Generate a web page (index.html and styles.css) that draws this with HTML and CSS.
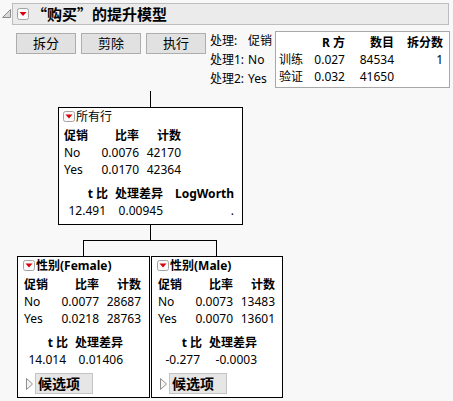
FILE: index.html
```html
<!DOCTYPE html>
<html lang="zh-CN">
<head>
<meta charset="utf-8">
<title>“购买”的提升模型</title>
<link rel="stylesheet" href="styles.css">
</head>
<body>
<div class="page">
  <div class="outline-head">
    <svg class="disc-open" width="9" height="9" viewBox="0 0 9 9"><polygon points="0.5,8.5 8.5,8.5 8.5,0.5" fill="#d9d9d9" stroke="#8c8c8c" stroke-width="1"/></svg>
    <div class="head-bar">
      <span class="menu-btn"><svg width="12" height="12" viewBox="0 0 12 12"><rect x="0.5" y="0.5" width="11" height="11" rx="2" fill="#fafafa" stroke="#a3a3a3"/><polygon points="2.5,4 9.5,4 6,8" fill="#d8000c"/></svg></span>
      <span class="head-title">“购买”的提升模型</span>
    </div>
  </div>

  <div class="controls">
    <div class="btns">
      <button class="btn">拆分</button>
      <button class="btn">剪除</button>
      <button class="btn">执行</button>
    </div>
    <div class="info">
      <span>处理:</span><span>促销</span>
      <span>处理1:</span><span>No</span>
      <span>处理2:</span><span>Yes</span>
    </div>
    <div class="summary">
      <span></span><span class="b r">R 方</span><span class="b r">数目</span><span class="b r">拆分数</span>
      <span>训练</span><span class="r">0.027</span><span class="r">84534</span><span class="r">1</span>
      <span>验证</span><span class="r">0.032</span><span class="r">41650</span><span></span>
    </div>
  </div>

  <div class="tree">
    <div class="vline"></div>
    <div class="node node-root">
      <div class="node-title">
        <span class="menu-btn small"><svg width="12" height="11" viewBox="0 0 12 11"><rect x="0.5" y="0.5" width="11" height="10" rx="2" fill="#fafafa" stroke="#a3a3a3"/><polygon points="2.5,3.5 9.5,3.5 6,7.5" fill="#d8000c"/></svg></span>
        <span class="title-text">所有行</span>
      </div>
      <div class="grid1">
        <span class="b">促销</span><span class="b r">比率</span><span class="b r">计数</span>
        <span>No</span><span class="r">0.0076</span><span class="r">42170</span>
        <span>Yes</span><span class="r">0.0170</span><span class="r">42364</span>
      </div>
      <div class="grid2 grid2-root">
        <span class="b r">t 比</span><span class="b r">处理差异</span><span class="b r">LogWorth</span>
        <span class="r v">12.491</span><span class="r">0.00945</span><span class="r">.</span>
      </div>
    </div>
    <div class="vline2"></div>
    <div class="connector"></div>
    <div class="children">
      <div class="node node-child node-left">
        <div class="node-title">
          <span class="menu-btn small"><svg width="12" height="11" viewBox="0 0 12 11"><rect x="0.5" y="0.5" width="11" height="10" rx="2" fill="#fafafa" stroke="#a3a3a3"/><polygon points="2.5,3.5 9.5,3.5 6,7.5" fill="#d8000c"/></svg></span>
          <span class="title-text b">性别(Female)</span>
        </div>
        <div class="grid1">
          <span class="b">促销</span><span class="b r">比率</span><span class="b r">计数</span>
          <span>No</span><span class="r">0.0077</span><span class="r">28687</span>
          <span>Yes</span><span class="r">0.0218</span><span class="r">28763</span>
        </div>
        <div class="grid2">
          <span class="b r">t 比</span><span class="b r">处理差异</span>
          <span class="r v">14.014</span><span class="r">0.01406</span>
        </div>
        <div class="cand">
          <svg class="disc-closed" width="7" height="12" viewBox="0 0 7 12"><polygon points="0.5,0.5 6.5,6 0.5,11.5" fill="#f4f4f4" stroke="#8c8c8c"/></svg>
          <span class="cand-btn">候选项</span>
        </div>
      </div>
      <div class="node node-child node-right">
        <div class="node-title">
          <span class="menu-btn small"><svg width="12" height="11" viewBox="0 0 12 11"><rect x="0.5" y="0.5" width="11" height="10" rx="2" fill="#fafafa" stroke="#a3a3a3"/><polygon points="2.5,3.5 9.5,3.5 6,7.5" fill="#d8000c"/></svg></span>
          <span class="title-text b">性别(Male)</span>
        </div>
        <div class="grid1">
          <span class="b">促销</span><span class="b r">比率</span><span class="b r">计数</span>
          <span>No</span><span class="r">0.0073</span><span class="r">13483</span>
          <span>Yes</span><span class="r">0.0070</span><span class="r">13601</span>
        </div>
        <div class="grid2">
          <span class="b r">t 比</span><span class="b r">处理差异</span>
          <span class="r v">-0.277</span><span class="r">-0.0003</span>
        </div>
        <div class="cand">
          <svg class="disc-closed" width="7" height="12" viewBox="0 0 7 12"><polygon points="0.5,0.5 6.5,6 0.5,11.5" fill="#f4f4f4" stroke="#8c8c8c"/></svg>
          <span class="cand-btn">候选项</span>
        </div>
      </div>
    </div>
  </div>
</div>
</body>
</html>
```

FILE: styles.css
```css
* { box-sizing: border-box; }

html, body {
  margin: 0;
  padding: 0;
  background: #f8f8f8;
}

body {
  font-family: "Noto Sans", "Noto Sans CJK SC", sans-serif;
  font-size: 12px;
  color: #000;
}

.page {
  width: 453px;
  height: 401px;
  padding-top: 3px;
  overflow: hidden;
}

.b { font-weight: bold; }
.r { text-align: right; }

/* header */
.outline-head {
  display: flex;
  align-items: flex-start;
}

.disc-open {
  display: block;
  margin-left: 2px;
  margin-top: 6px;
  flex: none;
}

.head-bar {
  flex: 1;
  margin-left: 1px;
  margin-right: 4px;
  height: 22px;
  border: 1px solid #bdbdbd;
  background: #ebebeb;
  display: flex;
  align-items: center;
  padding-left: 4px;
}

.menu-btn {
  display: flex;
  flex: none;
}

.menu-btn svg { display: block; }

.head-title {
  margin-left: 3px;
  font-family: "Noto Sans CJK SC", "Noto Sans", sans-serif;
  font-size: 15px;
  font-weight: bold;
  line-height: 20px;
}

/* controls */
.controls {
  display: flex;
  align-items: flex-start;
  margin-top: 6px;
  margin-left: 16px;
}

.btns {
  display: flex;
  gap: 5px;
  margin-top: 2px;
}

.btn {
  width: 60px;
  height: 21px;
  padding: 0;
  border: 1px solid #adadad;
  background: #e1e1e1;
  font-family: "Noto Sans", "Noto Sans CJK SC", sans-serif;
  font-size: 13px;
  line-height: 19px;
  color: #000;
}

.info {
  width: 62px;
  margin-left: 4px;
  display: grid;
  grid-template-columns: auto auto;
  justify-content: start;
  column-gap: 4px;
  line-height: 19px;
  white-space: nowrap;
}

.summary {
  width: 175px;
  height: 57px;
  margin-left: 3px;
  border: 1px solid #a8a8a8;
  background: #fff;
  padding: 2px 6px 0 3px;
  display: grid;
  grid-template-columns: 30px 36px 49px 49px;
  grid-auto-rows: 17px;
  line-height: 17px;
  white-space: nowrap;
}

/* tree */
.tree {
  margin-top: 3px;
  margin-left: 17px;
  width: 266px;
  display: flex;
  flex-direction: column;
  align-items: flex-start;
}

.vline {
  width: 1px;
  height: 16px;
  margin-left: 133px;
  background: #000;
}

.vline2 {
  width: 1px;
  height: 15px;
  margin-left: 133px;
  background: #000;
}

.connector {
  width: 134px;
  height: 16px;
  margin-left: 66px;
  border: 1px solid #000;
  border-bottom: none;
}

.node {
  border: 1px solid #000;
  background: #fff;
  padding: 0 6px 5px 5px;
  white-space: nowrap;
}

.node-root {
  width: 185px;
  margin-left: 41px;
}

.children {
  display: flex;
  gap: 1px;
}

.node-child {
  padding: 0 6px 3px 6px;
}

.node-left { width: 133px; }
.node-right { width: 132px; }

.node-title {
  display: flex;
  align-items: center;
  height: 17px;
}

.node-title .menu-btn { margin-left: -1px; }

.title-text {
  margin-left: 1px;
  line-height: 17px;
}

.grid1 {
  margin-top: 2px;
  display: grid;
  grid-template-columns: 30px 45px 42px;
  grid-auto-rows: 17px;
  line-height: 17px;
}

.grid2 {
  margin-top: 7px;
  display: grid;
  grid-template-columns: 44px 55px;
  grid-auto-rows: 17px;
  line-height: 17px;
}

.grid2-root {
  grid-template-columns: 44px 55px 71px;
}

.grid2 .v { padding-right: 2px; }

.cand {
  margin-top: 5px;
  height: 21px;
  display: flex;
  align-items: center;
}

.disc-closed {
  display: block;
  margin-left: 2px;
  flex: none;
}

.cand-btn {
  margin-left: 2px;
  width: 58px;
  height: 21px;
  border: 1px solid #c4c4c4;
  background: #e6e6e6;
  padding-left: 2px;
  font-size: 14px;
  font-weight: bold;
  line-height: 19px;
}
```
